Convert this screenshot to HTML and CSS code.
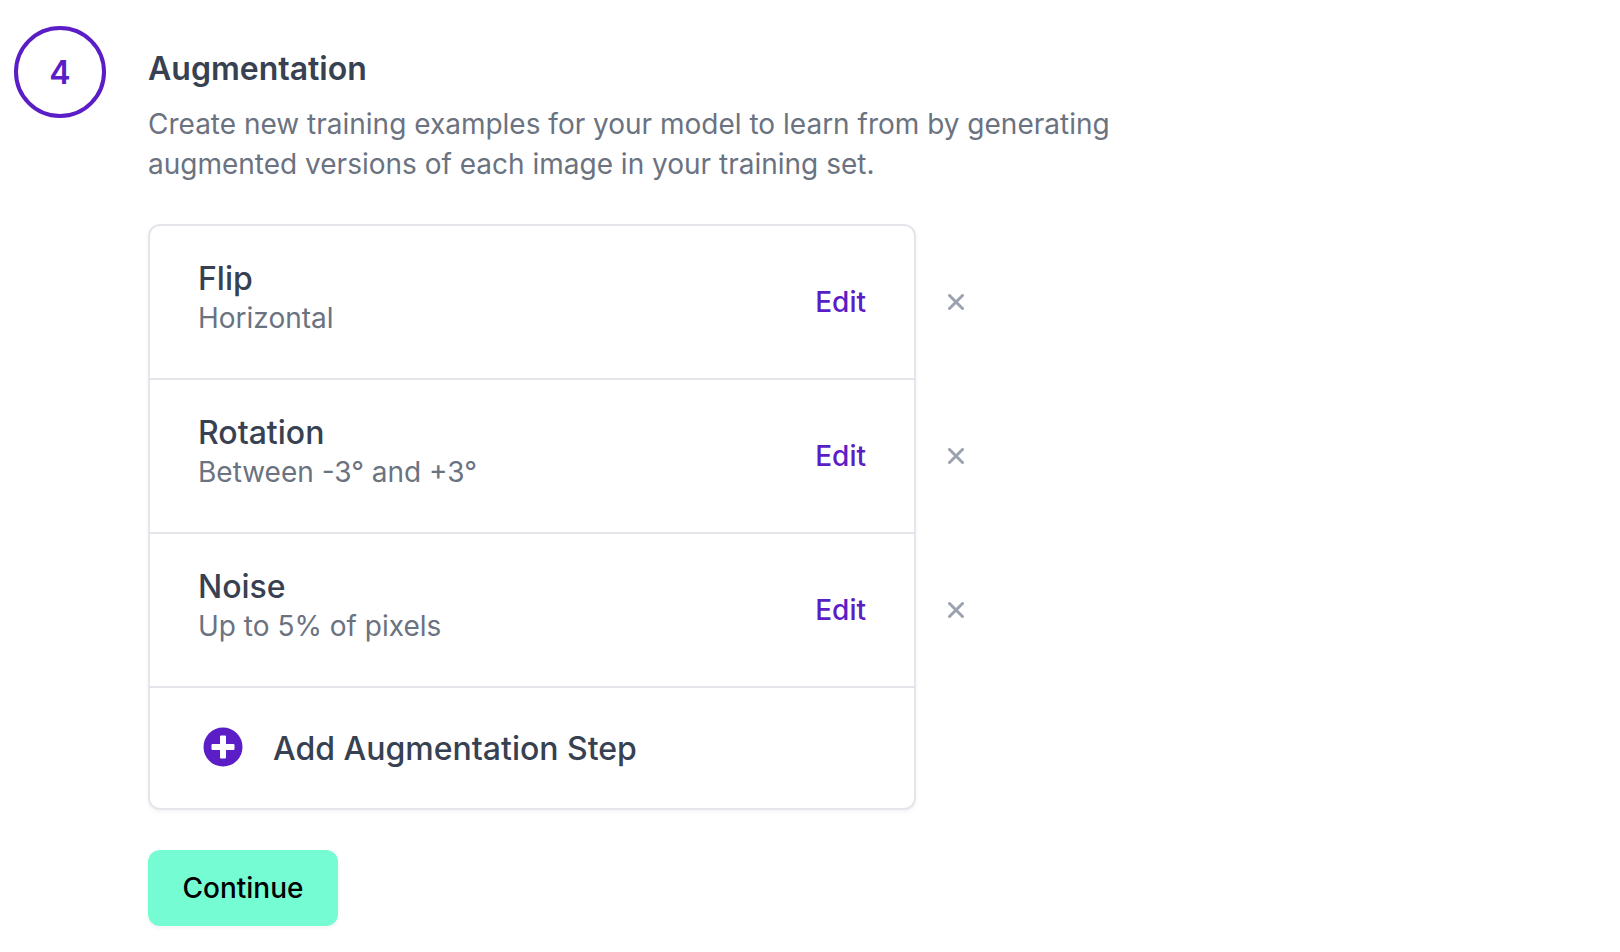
FILE: index.html
```html
<!DOCTYPE html>
<html lang="en">
<head>
<meta charset="utf-8">
<meta name="viewport" content="width=device-width, initial-scale=1">
<title>Augmentation</title>
<link rel="stylesheet" href="styles.css">
</head>
<body>
<main class="step">
  <div class="step-number">4</div>
  <section class="step-body">
    <h2 class="step-title">Augmentation</h2>
    <p class="step-description">Create new training examples for your model to learn from by generating augmented versions of each image in your training set.</p>
    <ul class="options">
      <li class="option">
        <div class="option-card">
          <div class="option-text">
            <h3 class="option-name">Flip</h3>
            <p class="option-detail">Horizontal</p>
          </div>
          <button class="edit" type="button">Edit</button>
        </div>
        <button class="remove" type="button" aria-label="Remove Flip"><svg viewBox="0 0 16 16" width="16" height="16" aria-hidden="true"><path d="M1.500 1.500L14.500 14.500M14.500 1.500L1.500 14.500"/></svg></button>
      </li>
      <li class="option">
        <div class="option-card">
          <div class="option-text">
            <h3 class="option-name">Rotation</h3>
            <p class="option-detail">Between -3° and +3°</p>
          </div>
          <button class="edit" type="button">Edit</button>
        </div>
        <button class="remove" type="button" aria-label="Remove Rotation"><svg viewBox="0 0 16 16" width="16" height="16" aria-hidden="true"><path d="M1.500 1.500L14.500 14.500M14.500 1.500L1.500 14.500"/></svg></button>
      </li>
      <li class="option">
        <div class="option-card">
          <div class="option-text">
            <h3 class="option-name">Noise</h3>
            <p class="option-detail">Up to 5% of pixels</p>
          </div>
          <button class="edit" type="button">Edit</button>
        </div>
        <button class="remove" type="button" aria-label="Remove Noise"><svg viewBox="0 0 16 16" width="16" height="16" aria-hidden="true"><path d="M1.500 1.500L14.500 14.500M14.500 1.500L1.500 14.500"/></svg></button>
      </li>
      <li class="option">
        <button class="option-card add" type="button">
          <svg class="add-icon" viewBox="0 0 40 40" width="40" height="40" aria-hidden="true"><circle cx="20" cy="20" r="19.5" fill="#5b1dc5"/><path d="M18 8.500h4a1 1 0 0 1 1 1V17h7.500a1 1 0 0 1 1 1v4a1 1 0 0 1-1 1H23v7.500a1 1 0 0 1-1 1h-4a1 1 0 0 1-1-1V23H9.500a1 1 0 0 1-1-1v-4a1 1 0 0 1 1-1H17V9.500a1 1 0 0 1 1-1z" fill="#fff"/></svg>
          <span>Add Augmentation Step</span>
        </button>
      </li>
    </ul>
    <button class="continue" type="button">Continue</button>
  </section>
</main>
</body>
</html>
```
FILE: styles.css
```css
* {
  box-sizing: border-box;
}

body {
  margin: 0;
  background: #fff;
  color: #374151;
  font-family: Inter, "Liberation Sans", sans-serif;
  font-size: 28px;
  line-height: 40px;
}

h2, h3, p, ul {
  margin: 0;
  padding: 0;
}

button {
  margin: 0;
  padding: 0;
  border: 0;
  background: none;
  color: inherit;
  font: inherit;
  cursor: pointer;
}

.step {
  display: flex;
  align-items: flex-start;
  gap: 42px;
  padding: 26px 14px;
}

.step-number {
  display: flex;
  flex: none;
  align-items: center;
  justify-content: center;
  width: 92px;
  height: 92px;
  padding-top: 2px;
  border: 4px solid #5b1dc5;
  border-radius: 50%;
  color: #5b1dc5;
  font-size: 32px;
  font-weight: 600;
}

.step-body {
  flex: 1;
  min-width: 0;
  padding-top: 23px;
}

.step-title {
  font-size: 32px;
  font-weight: 600;
  line-height: 40px;
}

.step-description {
  max-width: 1024px;
  margin-top: 15px;
  color: #6b7280;
}

.options {
  margin: 40px 0;
  list-style: none;
}

.option {
  display: flex;
}

.option-card {
  display: flex;
  flex: 0 1 768px;
  align-items: center;
  justify-content: space-between;
  padding: 33px 48px 41px;
  border: 2px solid #e5e5eb;
  border-top-width: 0;
  background: #fff;
  box-shadow: 0 2px 4px rgba(0, 0, 0, 0.05);
}

.option:first-child .option-card {
  border-top-width: 2px;
  border-radius: 12px 12px 0 0;
}

.option:last-child .option-card {
  border-radius: 0 0 12px 12px;
}

.option-name {
  font-size: 32px;
  font-weight: 500;
}

.option-detail {
  color: #6b7280;
  line-height: 38px;
}

.edit {
  align-self: stretch;
  padding-top: 8px;
  color: #5b1dc5;
  font-weight: 500;
}

.remove {
  display: flex;
  align-items: center;
  padding: 0 32px;
  border: solid transparent;
  border-width: 0 0 2px;
}

.option:first-child .remove {
  border-top-width: 2px;
}

.remove path {
  fill: none;
  stroke: #9ca3af;
  stroke-width: 3;
  stroke-linecap: round;
}

.option .add {
  align-items: flex-start;
  justify-content: flex-start;
  gap: 30px;
  padding: 39px 48px 37px 53px;
  font-size: 32px;
  font-weight: 500;
  line-height: 44px;
  text-align: left;
}

.add-icon {
  flex: none;
}

.continue {
  display: block;
  min-width: 190px;
  padding: 18px 34px;
  border-radius: 12px;
  background: #76fcd3;
  box-shadow: 0 2px 4px rgba(0, 0, 0, 0.05);
  color: #000;
  font-weight: 500;
}
```
